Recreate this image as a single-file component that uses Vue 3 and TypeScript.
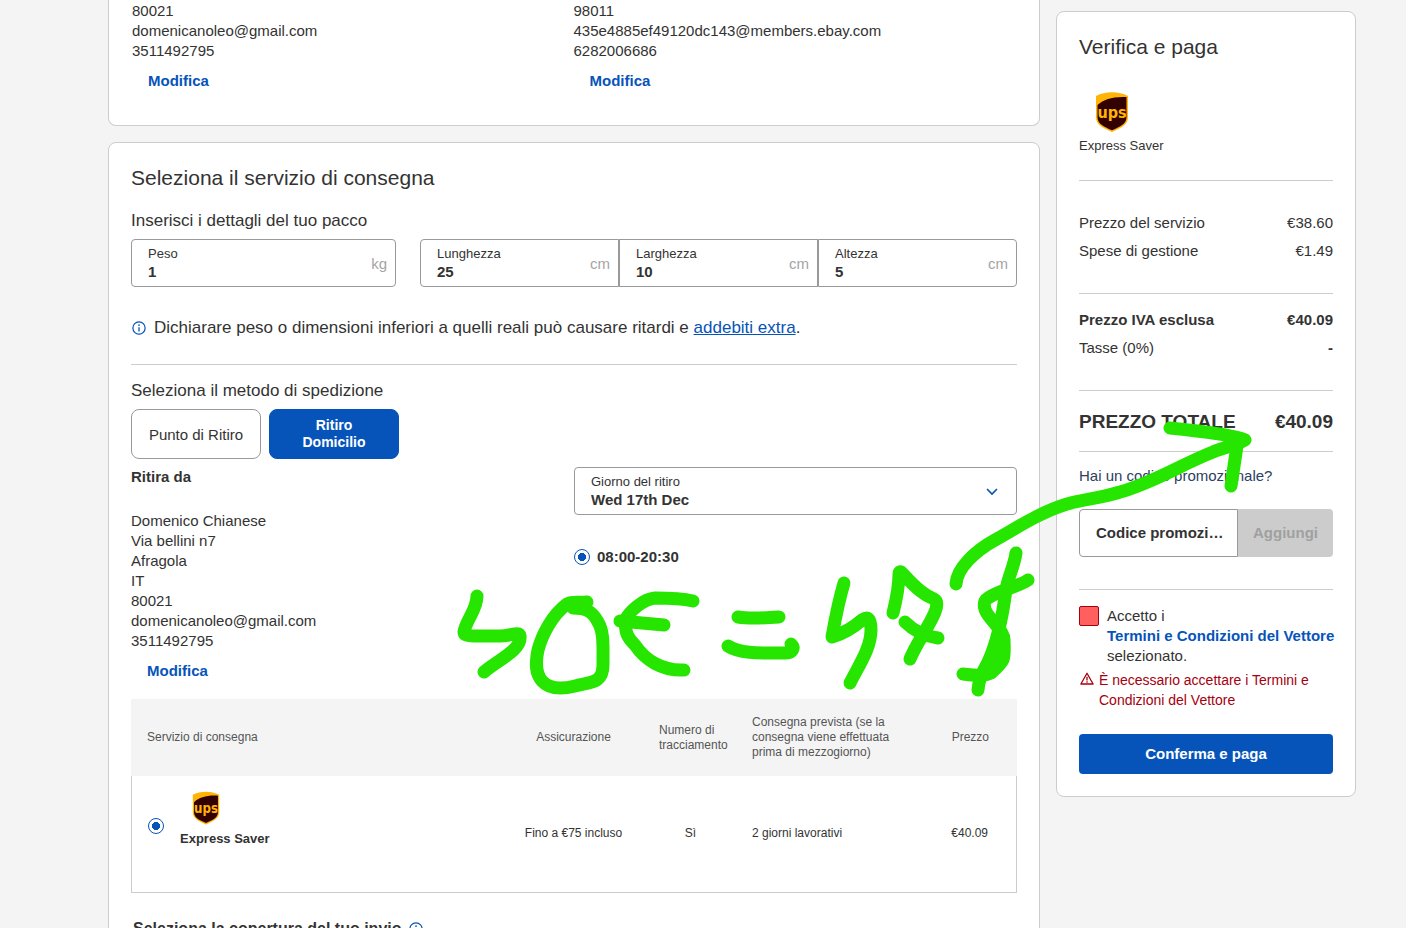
<script setup lang="ts">
import { ref } from 'vue'

interface Dimension {
  id: string
  label: string
  value: string
}

const weight = ref('1')
const dimensions = ref<Dimension[]>([
  { id: 'length', label: 'Lunghezza', value: '25' },
  { id: 'width', label: 'Larghezza', value: '10' },
  { id: 'height', label: 'Altezza', value: '5' },
])

const contacts = [
  ['80021', 'domenicanoleo@gmail.com', '3511492795'],
  ['98011', '435e4885ef49120dc143@members.ebay.com', '6282006686'],
]

const pickupAddress = [
  'Domenico Chianese',
  'Via bellini n7',
  'Afragola',
  'IT',
  '80021',
  'domenicanoleo@gmail.com',
  '3511492795',
]

const pickupDay = ref('Wed 17th Dec')
const slot = ref('08:00-20:30')
const service = ref('express-saver')
const promo = ref('')
const accepted = ref(false)
</script>

<template>
  <div class="page">
    <main class="main">
      <section class="card contacts">
        <div v-for="(lines, i) in contacts" :key="i" class="address">
          <p v-for="line in lines" :key="line">{{ line }}</p>
          <a href="#" class="edit">Modifica</a>
        </div>
      </section>

      <section class="card delivery">
        <h2 class="title">Seleziona il servizio di consegna</h2>
        <h3 class="subtitle parcel-title">Inserisci i dettagli del tuo pacco</h3>
        <div class="fields">
          <div class="field weight">
            <div class="field-body">
              <label for="weight">Peso</label>
              <input id="weight" v-model="weight" type="text" />
            </div>
            <span class="unit">kg</span>
          </div>
          <div class="dimensions">
            <div v-for="d in dimensions" :key="d.id" class="field">
              <div class="field-body">
                <label :for="d.id">{{ d.label }}</label>
                <input :id="d.id" v-model="d.value" type="text" />
              </div>
              <span class="unit">cm</span>
            </div>
          </div>
        </div>

        <p class="notice">
          <svg class="info" viewBox="0 0 16 16" aria-hidden="true">
            <circle cx="8" cy="8" r="7" fill="none" stroke="#0654ba" stroke-width="1.4" />
            <path d="M8 7v5" stroke="#0654ba" stroke-width="1.5" />
            <circle cx="8" cy="4.6" r="1" fill="#0654ba" />
          </svg>
          <span>Dichiarare peso o dimensioni inferiori a quelli reali può causare ritardi e <a href="#">addebiti extra</a>.</span>
        </p>

        <hr />

        <h3 class="subtitle method-title">Seleziona il metodo di spedizione</h3>
        <div class="methods">
          <button type="button" class="method">Punto di Ritiro</button>
          <button type="button" class="method active">Ritiro Domicilio</button>
        </div>

        <div class="pickup">
          <div class="address">
            <h4>Ritira da</h4>
            <p v-for="line in pickupAddress" :key="line">{{ line }}</p>
            <a href="#" class="edit">Modifica</a>
          </div>
          <div class="schedule">
            <div class="field">
              <div class="field-body">
                <label for="day">Giorno del ritiro</label>
                <select id="day" v-model="pickupDay">
                  <option>Wed 17th Dec</option>
                </select>
              </div>
              <svg class="chevron" viewBox="0 0 12 8" aria-hidden="true">
                <path d="M1.5 1.5L6 6l4.500-4.500" fill="none" stroke="#0654ba" stroke-width="1.700" stroke-linecap="round" />
              </svg>
            </div>
            <label class="slot">
              <input v-model="slot" type="radio" name="slot" value="08:00-20:30" />
              08:00-20:30
            </label>
          </div>
        </div>

        <table class="services">
          <colgroup>
            <col />
            <col class="c-insurance" />
            <col class="c-tracking" />
            <col class="c-arrival" />
            <col class="c-price" />
          </colgroup>
          <thead>
            <tr>
              <th class="service-cell">Servizio di consegna</th>
              <th class="center">Assicurazione</th>
              <th class="tracking">Numero di tracciamento</th>
              <th class="arrival">Consegna prevista (se la consegna viene effettuata prima di mezzogiorno)</th>
              <th class="price">Prezzo</th>
            </tr>
          </thead>
          <tbody>
            <tr>
              <td class="service-cell">
                <label class="service">
                  <input v-model="service" type="radio" name="service" value="express-saver" />
                  <span class="service-name">
                    <svg class="ups small" viewBox="0 0 34 40" aria-hidden="true">
                      <path d="M1 4C10-1 24-1 33 4v21c0 8-7 11-16 15C8 36 1 33 1 25z" fill="#ffb406" />
                      <path d="M2.500 13C9 7 18 4.300 31.500 5V25c0 7-6 9.500-14.500 13.300C8.500 34.500 2.500 32 2.500 25z" fill="#330000" />
                      <text x="17" y="26" text-anchor="middle">ups</text>
                    </svg>
                    Express Saver
                  </span>
                </label>
              </td>
              <td class="center">Fino a €75 incluso</td>
              <td class="center">Sì</td>
              <td class="arrival">2 giorni lavorativi</td>
              <td class="price">€40.09</td>
            </tr>
          </tbody>
        </table>

        <h3 class="coverage">
          Seleziona la copertura del tuo invio
          <svg class="info" viewBox="0 0 16 16" aria-hidden="true">
            <circle cx="8" cy="8" r="7" fill="none" stroke="#0654ba" stroke-width="1.4" />
            <path d="M8 7v5" stroke="#0654ba" stroke-width="1.5" />
            <circle cx="8" cy="4.6" r="1" fill="#0654ba" />
          </svg>
        </h3>
      </section>
    </main>

    <aside class="card summary">
      <h2 class="title">Verifica e paga</h2>
      <svg class="ups" viewBox="0 0 34 40" aria-hidden="true">
        <path d="M1 4C10-1 24-1 33 4v21c0 8-7 11-16 15C8 36 1 33 1 25z" fill="#ffb406" />
        <path d="M2.500 13C9 7 18 4.300 31.500 5V25c0 7-6 9.500-14.500 13.300C8.500 34.500 2.500 32 2.500 25z" fill="#330000" />
        <text x="17" y="26" text-anchor="middle">ups</text>
      </svg>
      <p class="carrier">Express Saver</p>

      <dl class="costs first">
        <div><dt>Prezzo del servizio</dt><dd>€38.60</dd></div>
        <div><dt>Spese di gestione</dt><dd>€1.49</dd></div>
      </dl>
      <dl class="costs second">
        <div class="strong"><dt>Prezzo IVA esclusa</dt><dd>€40.09</dd></div>
        <div><dt>Tasse (0%)</dt><dd><b>-</b></dd></div>
      </dl>
      <dl class="costs total">
        <div><dt>PREZZO TOTALE</dt><dd>€40.09</dd></div>
      </dl>

      <div class="promo">
        <label for="promo">Hai un codice promozionale?</label>
        <div class="promo-row">
          <input id="promo" v-model="promo" type="text" placeholder="Codice promozionale" />
          <button type="button" disabled>Aggiungi</button>
        </div>
      </div>

      <hr />

      <div class="terms">
        <input id="terms" v-model="accepted" type="checkbox" />
        <label for="terms">Accetto i <a href="#">Termini e Condizioni del Vettore</a> selezionato.</label>
      </div>
      <p class="error">
        <svg viewBox="0 0 14 13" aria-hidden="true">
          <path d="M7 1.200L13.100 12H0.900z" fill="none" stroke="#a5000d" stroke-width="1.300" stroke-linejoin="round" />
          <path d="M7 4.800v3.600M7 9.300v1.400" stroke="#a5000d" stroke-width="1.300" />
        </svg>
        <span>È necessario accettare i Termini e Condizioni del Vettore</span>
      </p>
      <button type="button" class="confirm">Conferma e paga</button>
    </aside>

    <!-- Freehand annotation laid over the page -->
    <svg class="ink" width="1406" height="928" viewBox="0 0 1406 928" aria-hidden="true">
      <path d="M477 596C477 610 466 620 464 632C464 635 468 636 474 636H500C510 636 519 631 520 636C522 650 498 660 484 672" />
      <path d="M587 602C578 603 573 601 567 604C552 615 542 635 538 650C535 665 536 674 542 681C550 690 563 689 575 686C590 682 603 684 603 665C603 645 604 632 598 622C592 610 584 608 573 608" />
      <path d="M693 601C680 598 667 598 655 598C643 599 629 612 626 619C624 632 628 638 635 645C645 660 662 671 684 670M620 621L664 625" />
      <path d="M738 617C750 619 765 618 779 617M728 646C740 654 762 653 785 653C793 653 795 648 791 644" />
      <path d="M844 583C838 603 835 620 832 637C845 633 854 627 862 620C868 616 871 618 871 630C871 648 859 665 850 683" />
      <path d="M893 613C897 597 899 583 899 574C899 571 901 571 903 574C917 589 924 595 934 599C938 601 937 607 935 612C929 627 917 642 910 659M905 622C912 629 923 636 938 638" />
      <path d="M1028 580C1018 587 1000 590 988 598C983 601 983 608 988 615C998 628 1004 633 1004 640C1005 660 1005 661 991 673C983 677 973 675 963 674M1016 553C1014 567 1008 577 1006 590C1002 620 997 643 988 662C982 674 979 678 978 690" />
      <path d="M956 584C957 568 975 551 995 540C1015 529 1038 513 1067 504C1085 499 1102 498 1120 492C1155 482 1180 465 1213 452C1222 448 1235 446 1245 440C1238 436 1200 431 1170 428M1237 446C1235 460 1233 472 1231 486" />
    </svg>
  </div>
</template>

<style>
body {
  margin: 0;
  background: #f4f4f4;
}
</style>

<style scoped>
* {
  box-sizing: border-box;
}

.page {
  position: relative;
  display: flex;
  align-items: flex-start;
  gap: 16px;
  height: 100vh;
  padding: 0 50px 0 108px;
  overflow: hidden;
  background: #f4f4f4;
  color: #333;
  font-family: "Liberation Sans", Arial, sans-serif;
  font-size: 15px;
  line-height: 20px;
}

h2, h3, h4, p, dl, dd {
  margin: 0;
}

input, select, button {
  margin: 0;
  font: inherit;
  color: inherit;
}

a {
  color: #0654ba;
}

hr {
  height: 1px;
  margin: 0;
  border: 0;
  background: #ccc;
}

.main {
  display: flex;
  flex: 1;
  flex-direction: column;
  gap: 16px;
  min-width: 0;
}

.card {
  border: 1px solid #ccc;
  border-radius: 8px;
  background: #fff;
}

.contacts {
  display: grid;
  grid-template-columns: 1fr 1fr;
  padding: 1px 24px 34px 23px;
  border-top: 0;
  border-radius: 0 0 8px 8px;
}

.edit {
  display: inline-block;
  margin: 10px 16px 0;
  font-weight: 700;
  text-decoration: none;
}

.delivery {
  padding: 21px 22px 40px;
}

.title {
  font-size: 21px;
  font-weight: 400;
  line-height: 28px;
}

.subtitle {
  font-size: 17px;
  font-weight: 400;
  line-height: 24px;
}

.parcel-title {
  margin-top: 17px;
}

.fields {
  display: grid;
  grid-template-columns: 265fr 597fr;
  gap: 24px;
  margin-top: 6px;
}

.dimensions {
  display: grid;
  grid-template-columns: repeat(3, 1fr);
}

.field {
  display: flex;
  align-items: center;
  min-width: 0;
  padding: 6px 8px 4px 16px;
  border: 1px solid #999;
  border-radius: 4px;
}

.dimensions .field {
  border-radius: 0;
}

.dimensions .field:first-child {
  border-radius: 4px 0 0 4px;
}

.dimensions .field:last-child {
  border-radius: 0 4px 4px 0;
}

.field-body {
  display: flex;
  flex: 1;
  flex-direction: column;
  min-width: 0;
}

.field-body label {
  font-size: 13px;
  line-height: 16px;
}

.field-body input,
.field-body select {
  width: 100%;
  height: 20px;
  padding: 0;
  border: 0;
  outline: 0;
  appearance: none;
  background: transparent;
  font-weight: 700;
}

.unit {
  color: #a5a5a5;
}

.notice {
  display: flex;
  align-items: center;
  gap: 8px;
  margin: 29px 0 24px;
  font-size: 17px;
  line-height: 24px;
}

.info {
  flex: none;
  width: 14px;
  height: 14px;
  margin-left: 1px;
}

.method-title {
  margin-top: 14px;
}

.methods {
  display: flex;
  gap: 8px;
  margin: 6px 0 8px;
}

.method {
  width: 130px;
  height: 50px;
  padding: 0 16px;
  border: 1px solid #999;
  border-radius: 8px;
  background: #fff;
  line-height: 17px;
}

.method.active {
  padding: 0 32px;
  border-color: #0654ba;
  background: #0654ba;
  color: #fff;
  font-size: 14px;
  font-weight: 700;
}

.pickup {
  display: grid;
  grid-template-columns: 1fr 1fr;
}

.pickup h4 {
  margin-bottom: 24px;
}

.chevron {
  width: 12px;
  height: 8px;
  margin-right: 10px;
}

.slot {
  display: flex;
  align-items: center;
  gap: 7px;
  margin-top: 32px;
  font-weight: 700;
}

input[type="radio"] {
  flex: none;
  width: 16px;
  height: 16px;
  border: 1px solid #0654ba;
  border-radius: 50%;
  appearance: none;
  background: radial-gradient(circle, #0654ba 4px, #fff 4px);
}

.services {
  width: 100%;
  margin-top: 18px;
  border-spacing: 0;
  table-layout: fixed;
  font-size: 12px;
  line-height: 15px;
}

.c-insurance {
  width: 143px;
}

.c-tracking {
  width: 91px;
}

.c-arrival {
  width: 181px;
}

.c-price {
  width: 100px;
}

.services th {
  height: 77px;
  padding: 0;
  background: #f4f4f4;
  color: #555;
  font-weight: 400;
  text-align: left;
}

.services td {
  height: 117px;
  padding: 0 0 2px;
  border-bottom: 1px solid #ccc;
}

.services td:first-child {
  padding-top: 15px;
  border-left: 1px solid #ccc;
  vertical-align: top;
}

.services td:last-child {
  border-right: 1px solid #ccc;
}

.services .service-cell {
  padding-left: 16px;
}

.services .center {
  text-align: center;
}

.services .tracking {
  padding-left: 14px;
}

.services .arrival {
  padding-left: 16px;
}

.services .price {
  padding-right: 28px;
  text-align: right;
}

.service {
  display: flex;
  align-items: center;
  gap: 16px;
}

.service-name {
  display: flex;
  flex-direction: column;
  gap: 4px;
  padding-bottom: 12px;
  font-size: 13px;
  font-weight: 700;
  line-height: 20px;
}

.ups {
  display: block;
  width: 34px;
  height: 40px;
  margin: 31px 16px 4px;
}

.ups.small {
  width: 28px;
  height: 34px;
  margin: 0 12px;
}

.ups text {
  fill: #ffb406;
  font-family: "Liberation Sans Narrow", "DejaVu Sans Condensed", sans-serif;
  font-size: 16px;
  font-weight: 700;
}

.coverage {
  display: flex;
  align-items: center;
  gap: 6px;
  margin: 24px 2px 0;
  font-size: 16px;
  line-height: 24px;
}

.summary {
  width: 300px;
  margin-top: 11px;
  padding: 21px 22px 22px;
}

.carrier {
  font-size: 13px;
}

.costs {
  display: flex;
  flex-direction: column;
  gap: 8px;
  border-top: 1px solid #ccc;
}

.costs div {
  display: flex;
  justify-content: space-between;
}

.costs.first {
  margin-top: 24px;
  padding: 32px 0;
}

.costs.second {
  padding: 16px 0 32px;
}

.strong {
  font-weight: 700;
}

.costs.total {
  padding: 17px 0 15px;
  border-bottom: 1px solid #ccc;
  font-size: 19px;
  font-weight: 700;
  line-height: 28px;
}

.promo {
  margin: 14px 0 32px;
}

.promo label {
  color: #2c4161;
}

.promo-row {
  display: flex;
  height: 48px;
  margin-top: 23px;
}

.promo-row input {
  flex: 1;
  min-width: 0;
  padding: 0 11px 0 16px;
  border: 1px solid #999;
  border-radius: 4px 0 0 4px;
  outline: 0;
  font-weight: 700;
  text-overflow: ellipsis;
}

.promo-row input::placeholder {
  color: #333;
  opacity: 1;
}

.promo-row button {
  width: 95px;
  padding: 0;
  border: 0;
  border-radius: 0 4px 4px 0;
  background: #ccc;
  color: #a0a0a0;
  font-weight: 700;
}

.terms {
  display: flex;
  align-items: flex-start;
  gap: 8px;
  margin-top: 16px;
}

.terms input {
  flex: none;
  width: 20px;
  height: 20px;
  border: 1px solid #a5000d;
  border-radius: 2px;
  appearance: none;
  background: #ff5f5f;
}

.terms a {
  display: block;
  font-weight: 700;
  text-decoration: none;
  white-space: nowrap;
}

.error {
  display: flex;
  align-items: flex-start;
  gap: 5px;
  margin-top: 4px;
  color: #a5000d;
  font-size: 14px;
}

.error svg {
  flex: none;
  width: 14px;
  height: 13px;
  margin: 2px 0 0 1px;
}

.confirm {
  width: 100%;
  height: 40px;
  margin-top: 24px;
  border: 0;
  border-radius: 4px;
  background: #0654ba;
  color: #fff;
  font-weight: 700;
}

.ink {
  position: absolute;
  top: 0;
  left: 0;
  fill: none;
  stroke: #26e600;
  stroke-width: 13;
  stroke-linecap: round;
  stroke-linejoin: round;
  pointer-events: none;
}
</style>
